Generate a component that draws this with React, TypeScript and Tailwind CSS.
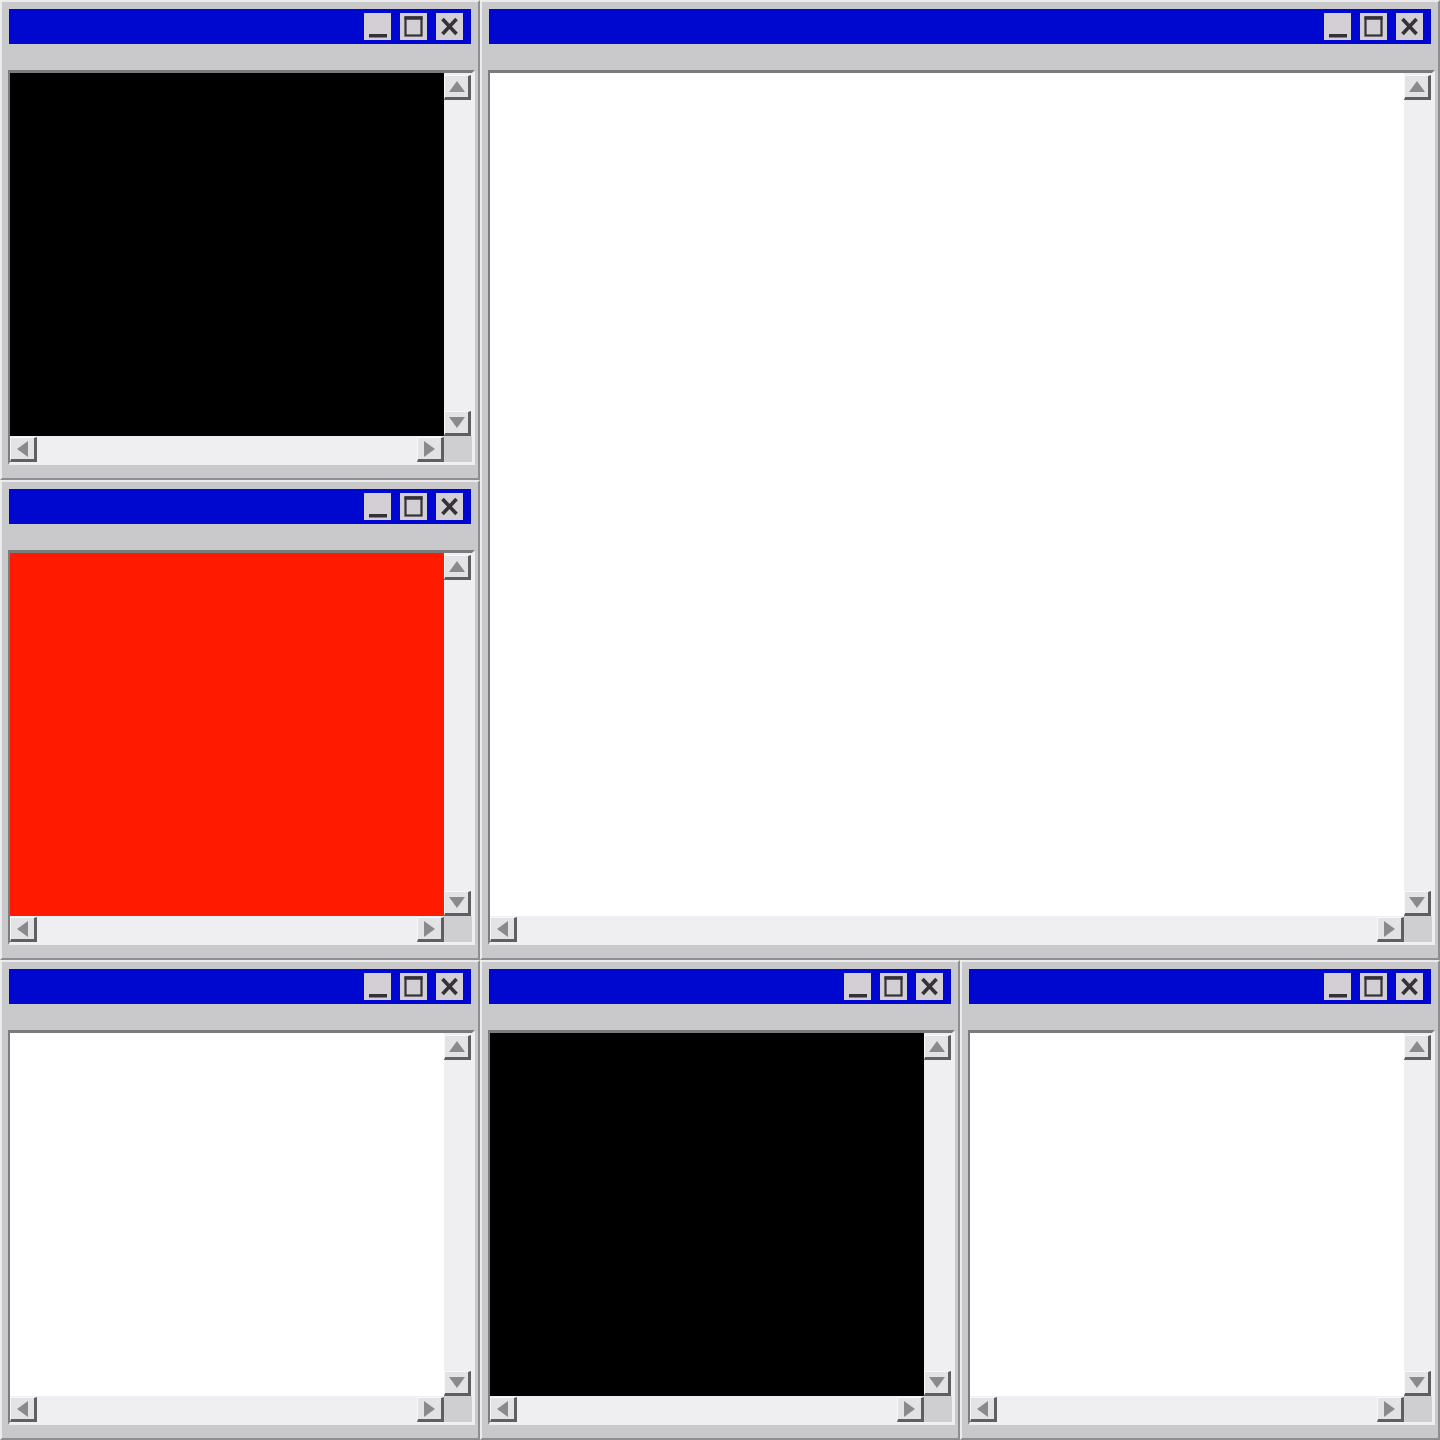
import React from "react";

function Tri({ dir }: { dir: "up" | "down" | "left" | "right" }) {
  const pts =
    dir === "up"
      ? "8,0 16,11 0,11"
      : dir === "down"
      ? "0,0 16,0 8,11"
      : dir === "left"
      ? "11,0 11,16 0,8"
      : "0,0 11,8 0,16";
  const w = dir === "up" || dir === "down" ? 16 : 11;
  const h = dir === "up" || dir === "down" ? 11 : 16;
  return (
    <svg width={w} height={h} viewBox={`0 0 ${w} ${h}`}>
      <polygon points={pts} fill="#8a898c" />
    </svg>
  );
}

function ScrollBtn({ dir }: { dir: "up" | "down" | "left" | "right" }) {
  return (
    <div className="flex h-[25px] w-[27px] items-center justify-center border-t border-l border-t-[#f8f8fa] border-l-[#f8f8fa] border-b-[3px] border-r-[3px] border-b-[#5f5f62] border-r-[#5f5f62] bg-[#e3e2e5]">
      <Tri dir={dir} />
    </div>
  );
}

function TitleBtn({ kind }: { kind: "min" | "max" | "close" }) {
  return (
    <div className="flex h-[27px] w-[27px] items-center justify-center bg-[#d3cfd4]">
      <svg width="27" height="27" viewBox="0 0 27 27">
        {kind === "min" && <rect x="5" y="21" width="18" height="3.5" fill="#333236" />}
        {kind === "max" && (
          <g fill="none" stroke="#333236">
            <rect x="5.5" y="4.5" width="16" height="18" strokeWidth="2.2" />
            <line x1="4.5" y1="5" x2="22.5" y2="5" strokeWidth="3.5" />
          </g>
        )}
        {kind === "close" && (
          <g stroke="#333236" strokeWidth="3.6" strokeLinecap="butt">
            <line x1="6.5" y1="6" x2="20.5" y2="21" />
            <line x1="20.5" y1="6" x2="6.5" y2="21" />
          </g>
        )}
      </svg>
    </div>
  );
}

function Win({ fill, className }: { fill: string; className?: string }) {
  return (
    <div
      className={`flex flex-col border-2 border-t-[#ececee] border-l-[#ececee] border-r-[#8e8d90] border-b-[#8e8d90] bg-[#c9c8ca] pl-[6px] pr-[3px] pt-[7px] pb-[13px] ${className ?? ""}`}
    >
      <div className="ml-px mr-[4px] flex h-[35px] shrink-0 items-center justify-end gap-[9px] bg-[#0008cf] pr-[8px]">
        <TitleBtn kind="min" />
        <TitleBtn kind="max" />
        <TitleBtn kind="close" />
      </div>
      <div className="mt-[26px] flex flex-1 flex-col border-t-[3px] border-l-2 border-r-[3px] border-b-[3px] border-t-[#7c7b7e] border-l-[#7c7b7e] border-r-[#efeef0] border-b-[#efeef0] bg-[#efeef0]">
        <div className="flex flex-1">
          <div className="flex-1" style={{ background: fill }} />
          <div className="flex w-[28px] flex-col justify-between bg-[#efeef0] pt-[2px]">
            <ScrollBtn dir="up" />
            <ScrollBtn dir="down" />
          </div>
        </div>
        <div className="flex h-[26px]">
          <div className="flex flex-1 justify-between bg-[#efeef0] pt-px">
            <ScrollBtn dir="left" />
            <ScrollBtn dir="right" />
          </div>
          <div className="w-[28px] bg-[#cfced1]" />
        </div>
      </div>
    </div>
  );
}

export default function App() {
  return (
    <div className="grid h-[1440px] w-[1440px] grid-cols-[480px_480px_480px] grid-rows-[480px_480px_480px] bg-[#c9c8ca]">
      <Win fill="#000000" className="col-start-1 row-start-1" />
      <Win fill="#ffffff" className="col-start-2 col-span-2 row-start-1 row-span-2" />
      <Win fill="#ff1a00" className="col-start-1 row-start-2" />
      <Win fill="#ffffff" className="col-start-1 row-start-3" />
      <Win fill="#000000" className="col-start-2 row-start-3" />
      <Win fill="#ffffff" className="col-start-3 row-start-3" />
    </div>
  );
}
